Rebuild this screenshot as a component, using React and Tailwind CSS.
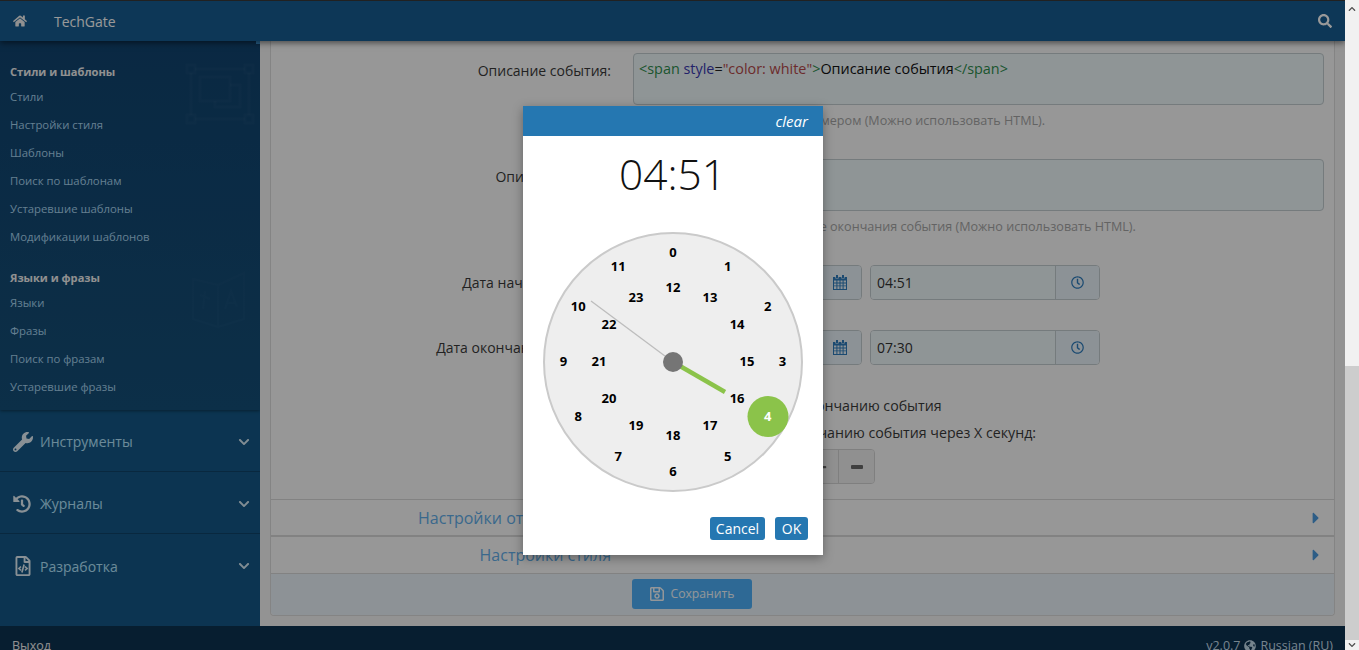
import React from "react";
import { FaHome, FaSearch, FaWrench, FaHistory, FaRegFileCode, FaChevronDown, FaChevronUp, FaRegClock, FaPlus, FaCaretRight, FaRegSave, FaGlobeAmericas } from "react-icons/fa";

const styles = ["Стили", "Настройки стиля", "Шаблоны", "Поиск по шаблонам", "Устаревшие шаблоны", "Модификации шаблонов"];
const langs = ["Языки", "Фразы", "Поиск по фразам", "Устаревшие фразы"];

function SideLink({ children }) {
  return <div className="h-[28px] leading-[28px] text-[11.34px] text-[#a8d4f0] pl-[10px]">{children}</div>;
}

function NavSection({ icon, label, border }) {
  return (
    <div className={`h-[62px] pt-[2px] flex items-center pl-[13px] pr-[10px] ${border ? "border-b border-[#0f4469]" : ""}`}>
      <span className="w-[27px] flex text-[#e4f0f8]">{icon}</span>
      <span className="text-[14px] text-[#b4e6ff] flex-1">{label}</span>
      <FaChevronDown size={12} className="text-[#d8eaf5]" />
    </div>
  );
}

function StylesMark() {
  return (
    <svg width="70" height="62" viewBox="0 0 70 62" fill="none" stroke="#ffffff" strokeOpacity="0.025" strokeWidth="3" className="absolute left-[185px] top-[22px]">
      <rect x="2" y="2" width="8" height="8" /><rect x="60" y="2" width="8" height="8" /><rect x="2" y="52" width="8" height="8" /><rect x="60" y="52" width="8" height="8" />
      <path d="M10 6H60M10 56H60M6 10V52M64 10V52" />
      <rect x="15" y="14" width="30" height="24" /><path d="M45 22H55V44H30V38" />
    </svg>
  );
}

function LangMark() {
  return (
    <svg width="58" height="62" viewBox="0 0 58 62" fill="none" stroke="#ffffff" strokeOpacity="0.02" strokeWidth="2.5" className="absolute left-[190px] top-[228px]">
      <path d="M3 10L28 16V58L3 50ZM28 16L54 4V50L28 58" /><path d="M10 26L20 30M15 22L13 40" /><path d="M35 40L41 22L47 38M37 34H45" />
    </svg>
  );
}

function CalendarIcon() {
  return (
    <svg width="14" height="15" viewBox="0 0 14 15" fill="currentColor">
      <path d="M3 0h2v3H3zM9 0h2v3H9z" />
      <path d="M0 2h2.4v1.6h3.2V2h2.8v1.6h3.2V2H14v13H0zM1 5.5v2h2.4v-2zm3.4 0v2h2.1v-2zm3.1 0v2h2.1v-2zm3.1 0v2H13v-2zM1 8.4v2h2.4v-2zm3.4 0v2h2.1v-2zm3.1 0v2h2.1v-2zm3.1 0v2H13v-2zM1 11.3V14h2.4v-2.7zm3.4 0V14h2.1v-2.7zm3.1 0V14h2.1v-2.7zm3.1 0V14H13v-2.7z" fillRule="evenodd" />
    </svg>
  );
}

function Sidebar() {
  return (
    <aside className="relative w-[260px] shrink-0 flex flex-col bg-[#145887] overflow-hidden">
      <div className="relative h-[369px] shrink-0 pt-[19px] bg-gradient-to-b from-[#114470] to-[#154f78] shadow-[0_1px_3px_rgba(0,0,0,0.4)]">
        <div className="absolute right-0 top-0 w-[4px] h-[3px] bg-[#3f9de0]" />
        <StylesMark />
        <LangMark />
        <div className="h-[23px] leading-[23px] pl-[10px] text-[11.1px] font-bold text-[#f2f2f2]">Стили и шаблоны</div>
        {styles.map((s) => <SideLink key={s}>{s}</SideLink>)}
        <div className="h-[23px] leading-[23px] mt-[15px] pl-[10px] text-[11.1px] font-bold text-[#f2f2f2]">Языки и фразы</div>
        {langs.map((s) => <SideLink key={s}>{s}</SideLink>)}
      </div>
      <NavSection icon={<FaWrench size={20} />} label="Инструменты" border />
      <NavSection icon={<FaHistory size={18} />} label="Журналы" border />
      <NavSection icon={<FaRegFileCode size={20} />} label="Разработка" />
    </aside>
  );
}

function TextRow({ label, children, hint }) {
  return (
    <div className="flex">
      <div className="w-[340px] shrink-0 text-right text-[14px] leading-[20px] pt-[8px] text-[#3a3a3a]">{label}</div>
      <div className="ml-[22px] w-[691px]">
        <div className="h-[52px] rounded-[4px] border border-[#c4cdd0] bg-[#eff8fb] px-[5px] py-[5px] text-[14.4px] leading-[20px]">{children}</div>
        <div className="mt-[7px] h-[17px] leading-[18px] text-[12.6px] text-[#a6a6a6]">{hint}</div>
      </div>
    </div>
  );
}

function Field({ value, icon, className }) {
  return (
    <div className={`h-[35px] flex rounded-[4px] border border-[#c4cdd0] overflow-hidden ${className}`}>
      <div className="flex-1 bg-[#eff8fb] px-[6px] text-[14px] leading-[33px] text-[#333]">{value}</div>
      <div className="w-[44px] bg-[#eaf4fb] border-l border-[#c4cdd0] flex items-center justify-center text-[#2d7cbd]">{icon}</div>
    </div>
  );
}

function DateRow({ label, time, className }) {
  return (
    <div className={`flex ${className}`}>
      <div className="w-[340px] shrink-0 text-right text-[14px] leading-[35px] text-[#3a3a3a]">{label}</div>
      <div className="ml-[22px] flex gap-[8px]">
        <Field value="" icon={<CalendarIcon />} className="w-[229px]" />
        <Field value={time} icon={<FaRegClock size={13} />} className="w-[230px]" />
      </div>
    </div>
  );
}

function AccordionRow({ label, className }) {
  return (
    <div className={`flex items-center border-t border-b border-[#d9d9d9] pr-[9px] ${className}`}>
      <div className="w-[340px] shrink-0 text-right text-[16px] text-[#62aeea]">{label}</div>
      <div className="flex-1" />
      <FaCaretRight size={18} className="text-[#4c9ce0]" />
    </div>
  );
}

function CheckLine({ children, className, boxClass }) {
  return (
    <div className={`flex items-center h-[20px] leading-[20px] text-[14.2px] text-[#3a3a3a] ${className}`}>
      <span className={`w-[13px] h-[13px] border border-[#999] bg-white rounded-[2px] ${boxClass}`} />
      {children}
    </div>
  );
}

function Panel() {
  return (
    <div className="mx-[10px] h-[575px] rounded-b-[4px] border border-t-0 border-[#dcdcdc] bg-[#fcfcfc] flex flex-col">
      <div className="pt-[12px] flex-1">
        <TextRow label="Описание события:" hint={"Описание события,\u00A0 перед таймером (Можно использовать HTML)."}>
          <span className="text-[#2f8f4e]">&lt;span</span> <span className="text-[#3a3ab0]">style</span><span className="text-[#222]">=</span><span className="text-[#b54a4a]">"color: white"</span><span className="text-[#2f8f4e]">&gt;</span><span className="text-[#111]">Описание события</span><span className="text-[#2f8f4e]">&lt;/span&gt;</span>
        </TextRow>
        <div className="mt-[30px]">
          <TextRow label="Описание после:" hint="Описание показываемое после окончания события (Можно использовать HTML)." />
        </div>
        <DateRow label="Дата начала события:" time="04:51" className="mt-[30px]" />
        <DateRow label="Дата окончания события:" time="07:30" className="mt-[30px]" />
        <div className="ml-[362px]">
          <CheckLine className="mt-[31px]" boxClass="mr-[13px]">Перенаправлять по окончанию события</CheckLine>
          <CheckLine className="mt-[7px]" boxClass="mr-[5px]">Перенаправить по окончанию события через X секунд:</CheckLine>
          <div className="mt-[6px] flex h-[35px] w-[242px] rounded-[4px] border border-[#d4d4d4] overflow-hidden">
            <div className="flex-1 bg-white" />
            <div className="w-[36px] border-l border-[#d4d4d4] bg-[#f0f0f0] flex items-center justify-center text-[#6a6a6a]"><FaPlus size={12} /></div>
            <div className="w-[36px] border-l border-[#d4d4d4] bg-[#f0f0f0] flex items-center justify-center"><span className="w-[12px] h-[4px] rounded-[1px] bg-[#6a6a6a]" /></div>
          </div>
        </div>
      </div>
      <AccordionRow label="Настройки отображения" className="h-[37px]" />
      <AccordionRow label="Настройки стиля" className="h-[38px]" />
      <div className="h-[41px] shrink-0 pl-[361px] pt-[5px] bg-[#ebf4fa] rounded-b-[4px]">
        <div className="h-[30px] w-[120px] rounded-[3px] bg-[#4eb0f8] flex items-center justify-center gap-[5px] text-[12.2px] text-[#f5fbff]">
          <FaRegSave size={16} /><span>Сохранить</span>
        </div>
      </div>
    </div>
  );
}

function Clock() {
  const outer = Array.from({ length: 12 }, (_, i) => ({ n: i, r: 109.5, a: i * 30 }));
  const inner = Array.from({ length: 12 }, (_, i) => ({ n: i + 12, r: 74, a: i * 30 }));
  return (
    <div className="relative mx-auto w-[260px] h-[260px] rounded-full bg-[#eeeeee] border-2 border-[#cacaca]">
      <svg width="260" height="260" viewBox="0 0 260 260" className="absolute left-[-2px] top-[-2px]">
        <line x1="130" y1="130" x2="48" y2="69" stroke="#bdbdbd" strokeWidth="1.3" />
        <circle cx="225" cy="184.5" r="20.5" fill="#8bc34a" />
        <line x1="130" y1="130" x2="182" y2="160" stroke="#8bc34a" strokeWidth="4.5" />
        <circle cx="130" cy="130" r="10" fill="#757575" />
      </svg>
      {[...outer, ...inner].map(({ n, r, a }) => {
        const rad = (a * Math.PI) / 180;
        return (
          <span
            key={n}
            className={`absolute w-[24px] h-[18px] leading-[18px] text-center text-[13px] font-bold ${n === 4 ? "text-white" : "text-black"}`}
            style={{ left: 128 + r * Math.sin(rad) - 12, top: 127 - r * Math.cos(rad) - 9 }}
          >
            {n}
          </span>
        );
      })}
    </div>
  );
}

function Modal() {
  return (
    <div className="absolute left-[523px] top-[106px] w-[300px] h-[449px] bg-white shadow-[0_3px_10px_rgba(0,0,0,0.35)]">
      <div className="h-[30px] bg-[#2577b1] flex items-center justify-end pr-[15px] text-[15px] italic text-white">clear</div>
      <div className="h-[76px] mb-[20px] flex items-center justify-center pr-[1px] text-[42.4px] font-[350] text-[#111]">04:51</div>
      <Clock />
      <div className="mt-[25px] flex justify-end gap-[10px] pr-[15px]">
        <div className="h-[23px] w-[55px] rounded-[3px] bg-[#2577b1] text-white text-[14px] leading-[23px] text-center">Cancel</div>
        <div className="h-[23px] w-[33px] rounded-[3px] bg-[#2577b1] text-white text-[14px] leading-[23px] text-center">OK</div>
      </div>
    </div>
  );
}

function Scrollbar() {
  return (
    <div className="w-[14px] shrink-0 bg-[#f1f1f1] flex flex-col items-center">
      <div className="h-[17px] flex items-center text-[#505050]"><FaChevronUp size={8} /></div>
      <div className="h-[349px]" />
      <div className="h-[274px] w-full bg-[#cdcdcd]" />
      <div className="h-[10px] flex items-center text-[#505050]"><FaChevronDown size={8} /></div>
    </div>
  );
}

export default function App() {
  return (
    <div className="relative w-[1359px] h-[650px] overflow-hidden flex [font-family:'Open_Sans',sans-serif]">
      <div className="relative w-[1345px] shrink-0 h-full flex flex-col overflow-hidden">
        <header className="relative z-10 h-[41px] shrink-0 border-t border-[#383838] bg-[#165d91] flex items-center pl-[13px] pr-[13px] shadow-[0_2px_6px_rgba(0,0,0,0.5)]">
          <FaHome size={14} className="text-[#f2f2f2]" />
          <span className="ml-[27px] text-[14px] text-white flex-1">TechGate</span>
          <FaSearch size={14} className="text-white" />
        </header>
        <div className="flex h-[585px] shrink-0">
          <Sidebar />
          <main className="flex-1 bg-[#f5f5f5] overflow-hidden">
            <Panel />
          </main>
        </div>
        <footer className="h-[24px] shrink-0 bg-[#0d3350] flex justify-between items-start pt-[11px] pl-[12px] pr-[12px] text-[12.5px] leading-[18px]">
          <span className="text-[#f0f0f0]">Выход</span>
          <span className="flex items-center gap-[4px] text-[#c4dcec]">v2.0.7 <FaGlobeAmericas size={12} /> Russian (RU)</span>
        </footer>
        <div className="absolute inset-0 z-20 bg-black/40" />
        <div className="absolute inset-0 z-30">
          <Modal />
        </div>
      </div>
      <Scrollbar />
    </div>
  );
}
